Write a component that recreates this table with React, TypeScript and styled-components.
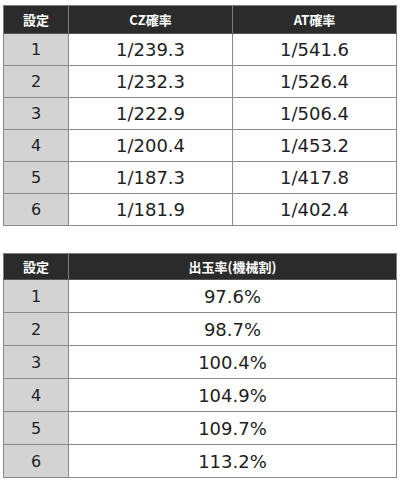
import React from "react";
import styled, { createGlobalStyle } from "styled-components";

const GlobalStyle = createGlobalStyle`
  html, body {
    margin: 0;
    padding: 0;
    background: #ffffff;
  }
  body {
    font-family: "DejaVu Sans", Verdana, sans-serif;
  }
`;

const Page = styled.div`
  display: flex;
  flex-direction: column;
  gap: 27px;
  padding: 5px 3px 0 3px;
  width: 394px;
`;

const Table = styled.table`
  width: 394px;
  border-collapse: collapse;
  table-layout: fixed;
  border: 1px solid #7d7d7d;
`;

const HeadRow = styled.tr<{ $h: number }>`
  height: ${(p) => p.$h}px;
`;

const BodyRow = styled.tr<{ $h: number }>`
  height: ${(p) => p.$h}px;
`;

const HeadCell = styled.th<{ $w?: number }>`
  width: ${(p) => (p.$w ? `${p.$w}px` : "auto")};
  background: #2b2b2b;
  color: #ffffff;
  font-family: "Noto Sans CJK JP", "DejaVu Sans", sans-serif;
  font-weight: 700;
  font-size: 13px;
  text-align: center;
  padding: 0;
  border: 1px solid #7d7d7d;
  border-top: none;
  border-bottom-color: #555;
`;

const LabelCell = styled.td`
  background: #d3d3d3;
  color: #1e1e1e;
  font-family: "DejaVu Sans", Verdana, sans-serif;
  font-size: 16px;
  text-align: center;
  padding: 0;
  border: 1px solid #8a8a8a;
`;

const ValueCell = styled.td`
  background: #ffffff;
  color: #1e1e1e;
  font-family: "DejaVu Sans", Verdana, sans-serif;
  font-size: 18px;
  text-align: center;
  padding: 0;
  border: 1px solid #8a8a8a;
`;

const probRows = [
  ["1", "1/239.3", "1/541.6"],
  ["2", "1/232.3", "1/526.4"],
  ["3", "1/222.9", "1/506.4"],
  ["4", "1/200.4", "1/453.2"],
  ["5", "1/187.3", "1/417.8"],
  ["6", "1/181.9", "1/402.4"],
];

const payoutRows = [
  ["1", "97.6%"],
  ["2", "98.7%"],
  ["3", "100.4%"],
  ["4", "104.9%"],
  ["5", "109.7%"],
  ["6", "113.2%"],
];

export default function App() {
  return (
    <>
      <GlobalStyle />
      <Page>
        <Table>
          <thead>
            <HeadRow $h={28}>
              <HeadCell $w={64}>設定</HeadCell>
              <HeadCell>CZ確率</HeadCell>
              <HeadCell>AT確率</HeadCell>
            </HeadRow>
          </thead>
          <tbody>
            {probRows.map((r) => (
              <BodyRow key={r[0]} $h={32}>
                <LabelCell>{r[0]}</LabelCell>
                <ValueCell>{r[1]}</ValueCell>
                <ValueCell>{r[2]}</ValueCell>
              </BodyRow>
            ))}
          </tbody>
        </Table>

        <Table>
          <thead>
            <HeadRow $h={26}>
              <HeadCell $w={64}>設定</HeadCell>
              <HeadCell>出玉率(機械割)</HeadCell>
            </HeadRow>
          </thead>
          <tbody>
            {payoutRows.map((r) => (
              <BodyRow key={r[0]} $h={33}>
                <LabelCell>{r[0]}</LabelCell>
                <ValueCell>{r[1]}</ValueCell>
              </BodyRow>
            ))}
          </tbody>
        </Table>
      </Page>
    </>
  );
}
